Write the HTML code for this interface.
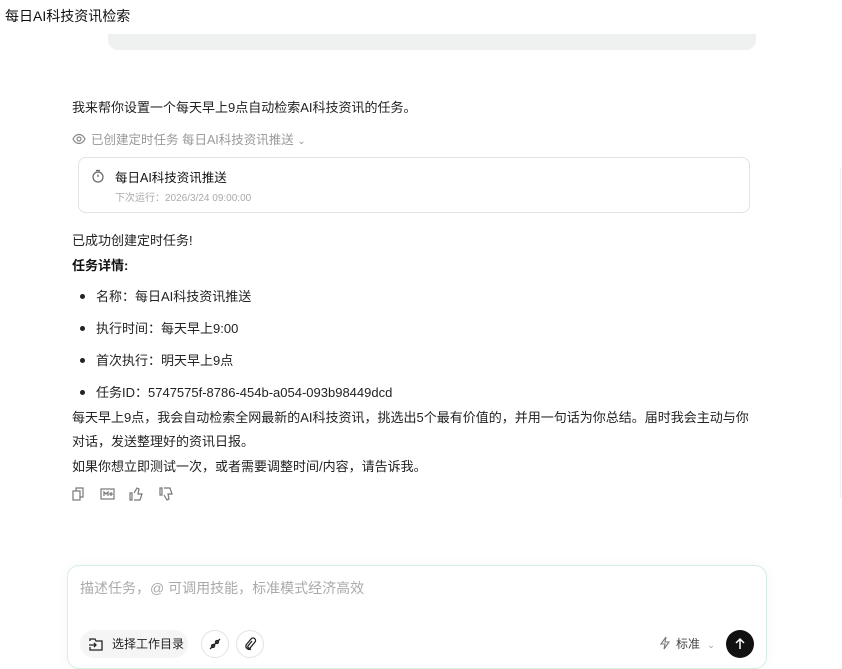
<!DOCTYPE html>
<html><head><meta charset="utf-8"><style>
*{margin:0;padding:0;box-sizing:border-box}
body{width:842px;height:666px;background:#fff;font-family:"Liberation Sans","Noto Sans CJK SC",sans-serif;color:#222;position:relative;overflow:hidden;font-size:13px}
.a{position:absolute;white-space:nowrap}
.g{color:#999}
.dot{position:absolute;left:80px;width:5px;height:5px;border-radius:50%;background:#222}
</style></head><body>
<div class="a" style="left:5px;top:6px;font-size:14px;color:#111">每日AI科技资讯检索</div>
<div class="a" style="left:108px;top:34px;width:648px;height:16px;background:#eff1f1;border-radius:0 0 10px 10px"></div>
<div class="a" style="left:72px;top:97px">我来帮你设置一个每天早上9点自动检索AI科技资讯的任务。</div>
<div class="a g" style="left:72px;top:129px;font-size:12.5px">
<svg width="14" height="14" viewBox="0 0 14 14" style="vertical-align:-2px;margin-right:5px"><path d="M1 7c1.5-3 3.5-4.5 6-4.5S11.5 4 13 7c-1.5 3-3.5 4.5-6 4.5S2.5 10 1 7z" fill="none" stroke="#888" stroke-width="1.2"/><circle cx="7" cy="7" r="2" fill="none" stroke="#888" stroke-width="1.2"/></svg>已创建定时任务 每日AI科技资讯推送 <span style="font-size:10px">⌄</span></div>
<div class="a" style="left:78px;top:157px;width:672px;height:56px;border:1px solid #e3e3e3;border-radius:8px"></div>
<svg class="a" style="left:91px;top:169px" width="14" height="14" viewBox="0 0 14 14"><circle cx="7" cy="8" r="5" fill="none" stroke="#666" stroke-width="1.2"/><path d="M5 1.5h4M7 8V5.5" stroke="#666" stroke-width="1.2" fill="none"/></svg>
<div class="a" style="left:115px;top:167px;font-size:12.5px;color:#111">每日AI科技资讯推送</div>
<div class="a" style="left:115px;top:189px;font-size:10px;color:#aaa">下次运行：2026/3/24 09:00:00</div>
<div class="a" style="left:72px;top:230px">已成功创建定时任务!</div>
<div class="a" style="left:72px;top:255px;font-weight:bold;color:#111">任务详情:</div>
<div class="dot" style="top:294px"></div><div class="a" style="left:96px;top:286px">名称：每日AI科技资讯推送</div>
<div class="dot" style="top:326px"></div><div class="a" style="left:96px;top:318px">执行时间：每天早上9:00</div>
<div class="dot" style="top:358px"></div><div class="a" style="left:96px;top:350px">首次执行：明天早上9点</div>
<div class="dot" style="top:390px"></div><div class="a" style="left:96px;top:382px">任务ID：5747575f-8786-454b-a054-093b98449dcd</div>
<div class="a" style="left:72px;top:407px">每天早上9点，我会自动检索全网最新的AI科技资讯，挑选出5个最有价值的，并用一句话为你总结。届时我会主动与你</div>
<div class="a" style="left:72px;top:431px">对话，发送整理好的资讯日报。</div>
<div class="a" style="left:72px;top:456px">如果你想立即测试一次，或者需要调整时间/内容，请告诉我。</div>
<svg class="a" style="left:70px;top:486px" width="110" height="16" viewBox="0 0 110 16" fill="none" stroke="#777" stroke-width="1.2">
<rect x="3" y="5" width="7" height="9"/><path d="M6 5V2h7v9h-3"/>
<rect x="31" y="3" width="13" height="10"/><path d="M34 10V6l2 2 2-2v4M41 6v4M39 8h4"/>
<path d="M62 7v7h-2V7zM64 14h6l2-6h-4l1-5-2-1-3 5"/>
<path d="M92 9V2h-2v7zM94 2h6l2 6h-4l1 5-2 1-3-5"/>
</svg>
<div class="a" style="left:67px;top:565px;width:700px;height:104px;border:1px solid #d6eee0;border-radius:12px;box-shadow:0 0 12px rgba(0,0,0,0.04)"></div>
<div class="a" style="left:80px;top:578px;font-size:14px;color:#aaa">描述任务，@ 可调用技能，标准模式经济高效</div>
<div class="a" style="left:80px;top:630px;width:108px;height:28px;background:#f5f5f5;border-radius:14px"></div>
<svg class="a" style="left:88px;top:636px" width="16" height="16" viewBox="0 0 16 16" fill="none" stroke="#222" stroke-width="1.3"><path d="M2 5V3h5l1 2h6v9H2v-3"/><path d="M1 9h7M6 7l2 2-2 2"/></svg>
<div class="a" style="left:112px;top:635px;font-size:12px;color:#222">选择工作目录</div>
<div class="a" style="left:201px;top:630px;width:28px;height:28px;border:1px solid #e3e3e3;border-radius:50%"></div>
<svg class="a" style="left:208px;top:637px" width="14" height="14" viewBox="0 0 14 14" fill="none" stroke="#222" stroke-width="1.3"><path d="M3 11l8-8M5 7l2 2M2 12l1-1M11 3l1-1"/><circle cx="5" cy="9" r="1.5"/><circle cx="9" cy="5" r="1.5"/></svg>
<div class="a" style="left:236px;top:630px;width:28px;height:28px;border:1px solid #e3e3e3;border-radius:50%"></div>
<svg class="a" style="left:243px;top:637px" width="14" height="14" viewBox="0 0 14 14" fill="none" stroke="#222" stroke-width="1.3"><path d="M9 4l-4 5a1.5 1.5 0 002 2l5-6a2.5 2.5 0 00-4-3L3 8a3.5 3.5 0 005 4"/></svg>
<svg class="a" style="left:659px;top:636px" width="12" height="14" viewBox="0 0 12 14" fill="none" stroke="#777" stroke-width="1.1"><path d="M7 1L2 8h4l-1 5 5-7H6z"/></svg>
<div class="a" style="left:676px;top:635px;font-size:12px;color:#444">标准 <span style="font-size:9px;color:#999;margin-left:4px">⌄</span></div>
<div class="a" style="left:726px;top:630px;width:28px;height:28px;background:#111;border-radius:50%"></div>
<svg class="a" style="left:733px;top:637px" width="14" height="14" viewBox="0 0 14 14" fill="none" stroke="#fff" stroke-width="1.5"><path d="M7 12V2M3 6l4-4 4 4"/></svg>
<div class="a" style="left:840px;top:168px;width:1px;height:330px;background:#f0f0f0"></div>
</body></html>
